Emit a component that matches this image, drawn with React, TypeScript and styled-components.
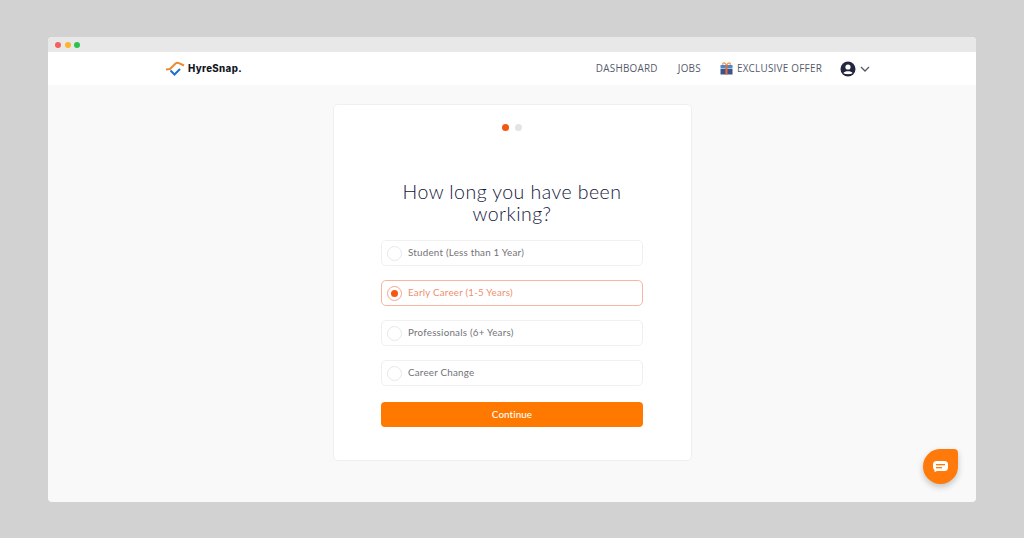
import React from "react";
import styled, { createGlobalStyle } from "styled-components";

const GlobalStyle = createGlobalStyle`
  html, body {
    margin: 0;
    height: 100%;
    background: #d2d2d2;
    font-family: "Lato", "Open Sans", sans-serif;
  }
  * { box-sizing: border-box; }
`;

const Page = styled.div`
  width: 1024px;
  height: 538px;
  padding: 37px 48px 36px;
  overflow: hidden;
`;

const Window = styled.div`
  position: relative;
  display: flex;
  flex-direction: column;
  height: 465px;
  border-radius: 4px;
  overflow: hidden;
  background: #f9f9f9;
`;

const TitleBar = styled.div`
  display: flex;
  align-items: center;
  gap: 3.5px;
  height: 15px;
  flex: none;
  padding: 0 0 0 7px;
  background: #e8e8e8;
`;

const Light = styled.span<{ $color: string }>`
  width: 6px;
  height: 6px;
  border-radius: 50%;
  background: ${(p) => p.$color};
`;

const Nav = styled.header`
  display: flex;
  align-items: center;
  justify-content: space-between;
  height: 33px;
  flex: none;
  padding: 0 106px 0 117px;
  background: #fff;
`;

const Brand = styled.div`
  display: flex;
  align-items: center;
  gap: 3px;
  margin-top: -1px;
  font-family: "Inter", sans-serif;
  font-size: 9.7px;
  font-weight: 800;
  letter-spacing: 0.35px;
  color: #14171f;
`;

const NavLinks = styled.nav`
  display: flex;
  align-items: center;
  font-family: "Open Sans", sans-serif;
  font-size: 9.9px;
  letter-spacing: 0.25px;
  color: #555a6c;
`;

const NavLink = styled.span<{ $gap?: number }>`
  display: flex;
  align-items: center;
  gap: 4px;
  margin-right: ${(p) => p.$gap ?? 0}px;
`;

const NavText = styled.span`
  position: relative;
  top: -1px;
`;

const Main = styled.main`
  flex: 1;
  display: flex;
  justify-content: center;
  padding-top: 19px;
`;

const Card = styled.section`
  display: flex;
  flex-direction: column;
  align-items: center;
  width: 359px;
  height: 357px;
  padding: 19px 48px 0;
  background: #fff;
  border: 1px solid #efefef;
  border-radius: 5px;
`;

const Dots = styled.div`
  display: flex;
  gap: 6px;
  margin-bottom: 50px;
`;

const Dot = styled.span<{ $active?: boolean }>`
  width: 7px;
  height: 7px;
  border-radius: 50%;
  background: ${(p) => (p.$active ? "#f4570f" : "#e4e4e6")};
`;

const Title = styled.h1`
  width: 240px;
  margin: 0 0 15px;
  font-size: 19.5px;
  font-weight: 300;
  line-height: 22px;
  text-align: center;
  letter-spacing: 0.45px;
  color: #14163a;
`;

const Options = styled.div`
  display: flex;
  flex-direction: column;
  gap: 14px;
  width: 262px;
`;

const Option = styled.div<{ $selected?: boolean }>`
  display: flex;
  align-items: center;
  gap: 6px;
  height: 26px;
  padding: 0 5px;
  border: 1px solid ${(p) => (p.$selected ? "#f5b7a2" : "#f0f0f0")};
  border-radius: 5px;
  font-size: 9.8px;
  letter-spacing: 0.22px;
  color: ${(p) => (p.$selected ? "#ee8f6e" : "#737378")};
`;

const OptionLabel = styled.span`
  position: relative;
  top: -1px;
`;

const Radio = styled.span<{ $selected?: boolean }>`
  display: flex;
  align-items: center;
  justify-content: center;
  width: 15px;
  height: 15px;
  flex: none;
  border: 1px solid ${(p) => (p.$selected ? "#f0a68e" : "#e8e8e8")};
  border-radius: 50%;

  &::after {
    content: "";
    display: ${(p) => (p.$selected ? "block" : "none")};
    width: 7px;
    height: 7px;
    border-radius: 50%;
    background: #f4570f;
  }
`;

const ContinueButton = styled.button`
  width: 262px;
  height: 25px;
  margin-top: 16px;
  padding: 0 0 2px;
  border: none;
  border-radius: 4px;
  background: #ff7800;
  color: #fff;
  font-family: inherit;
  font-size: 9.8px;
  font-weight: 500;
  letter-spacing: 0.1px;
`;

const ChatBubble = styled.div`
  position: absolute;
  left: 875px;
  top: 412px;
  display: flex;
  align-items: center;
  justify-content: center;
  width: 35px;
  height: 35px;
  border-radius: 50% 4px 50% 50%;
  background: #ff7a0a;
  box-shadow: 0 3px 6px rgba(0, 0, 0, 0.22);
`;

const Logo = () => (
  <svg width="20" height="16" viewBox="0 0 20 16" fill="none" strokeWidth="2">
    <path d="M1 9.5 L5 9 L10.5 3.5 Q12.5 2 14.5 3.5 L19 5.5" stroke="#ee8a2e" />
    <path d="M5.5 10.5 L9.5 14.5 L15 9" stroke="#1f6fd0" />
  </svg>
);

const Gift = () => (
  <svg width="13" height="13" viewBox="0 0 13 13">
    <path d="M6.5 3 C4 -0.5 1.5 1 3.2 3 M6.5 3 C9 -0.5 11.5 1 9.8 3" fill="none" stroke="#f0913f" strokeWidth="1.1" />
    <rect x="0.5" y="3" width="12" height="3.5" fill="#4f86c9" />
    <rect x="0.5" y="7" width="12" height="5.5" fill="#3f5286" />
    <rect x="5.5" y="3" width="2" height="9.5" fill="#e2703f" />
  </svg>
);

const Account = () => (
  <svg width="16" height="16" viewBox="0 0 16 16">
    <circle cx="8" cy="8" r="7.5" fill="#22263f" />
    <circle cx="8" cy="6" r="2.6" fill="#fff" />
    <path d="M3.4 12 C4.5 9.8 11.5 9.8 12.6 12 C11 13.6 5 13.6 3.4 12 Z" fill="#fff" />
  </svg>
);

const Chevron = () => (
  <svg width="10" height="6" viewBox="0 0 10 6" fill="none" stroke="#555a66" strokeWidth="1.3">
    <path d="M1 1 L5 5 L9 1" />
  </svg>
);

const ChatIcon = () => (
  <svg width="15" height="11" viewBox="0 0 15 11">
    <path d="M3.5 0 H11.5 A3.5 3.5 0 0 1 15 3.5 V6.5 A3.5 3.5 0 0 1 11.5 10 H4 L1.5 11 V9 A3.5 3.5 0 0 1 0 6.5 V3.5 A3.5 3.5 0 0 1 3.5 0 Z" fill="#fff" />
    <rect x="3" y="3" width="9" height="1.3" fill="#ff7a0a" />
    <rect x="3" y="6" width="6" height="1.3" fill="#ff7a0a" />
  </svg>
);

const options = [
  { id: "student", label: "Student (Less than 1 Year)" },
  { id: "early", label: "Early Career (1-5 Years)", selected: true },
  { id: "pro", label: "Professionals (6+ Years)" },
  { id: "change", label: "Career Change" },
];

export default function App() {
  return (
    <Page>
      <GlobalStyle />
      <Window>
        <TitleBar>
          <Light $color="#f55f5f" />
          <Light $color="#fbb52f" />
          <Light $color="#2dc24e" />
        </TitleBar>
        <Nav>
          <Brand>
            <Logo />
            HyreSnap.
          </Brand>
          <NavLinks>
            <NavLink $gap={20}>
              <NavText>DASHBOARD</NavText>
            </NavLink>
            <NavLink $gap={19}>
              <NavText>JOBS</NavText>
            </NavLink>
            <NavLink $gap={18}>
              <Gift />
              <NavText>EXCLUSIVE OFFER</NavText>
            </NavLink>
            <NavLink>
              <Account />
              <Chevron />
            </NavLink>
          </NavLinks>
        </Nav>
        <Main>
          <Card>
            <Dots>
              <Dot $active />
              <Dot />
            </Dots>
            <Title>How long you have been working?</Title>
            <Options>
              {options.map((option) => (
                <Option key={option.id} $selected={option.selected}>
                  <Radio $selected={option.selected} />
                  <OptionLabel>{option.label}</OptionLabel>
                </Option>
              ))}
            </Options>
            <ContinueButton>Continue</ContinueButton>
          </Card>
        </Main>
        <ChatBubble>
          <ChatIcon />
        </ChatBubble>
      </Window>
    </Page>
  );
}
